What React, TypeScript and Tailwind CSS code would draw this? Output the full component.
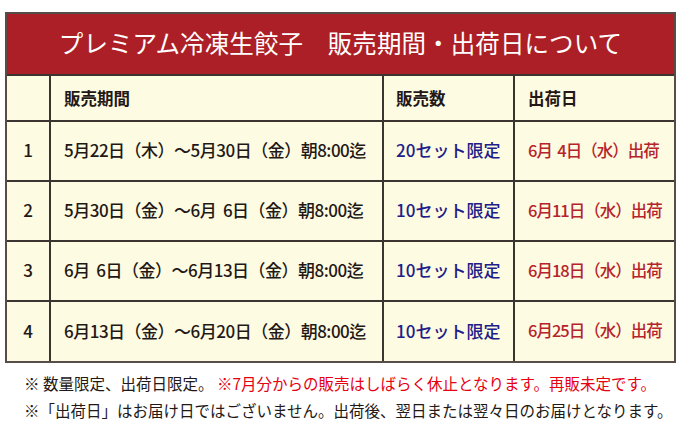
const rows = [
  { no: '1', period: '5月22日（木）～5月30日（金）朝8:00迄', qty: '20セット限定', ship: '6月  4日（水）出荷' },
  { no: '2', period: '5月30日（金）～6月  6日（金）朝8:00迄', qty: '10セット限定', ship: '6月11日（水）出荷' },
  { no: '3', period: '6月  6日（金）～6月13日（金）朝8:00迄', qty: '10セット限定', ship: '6月18日（水）出荷' },
  { no: '4', period: '6月13日（金）～6月20日（金）朝8:00迄', qty: '10セット限定', ship: '6月25日（水）出荷' }
];

const App = () => {
  return (
    <div
      className="w-[680px] h-[439px] bg-white pt-[12px] pl-[5px]"
      style={{ fontFamily: '"Noto Sans CJK JP", "Noto Sans", sans-serif' }}
    >
      <div className="w-[671px] border-2 border-[#574c47] bg-[#fefbe3]">
        <div className="h-[60px] bg-[#ad1f26] flex items-center justify-center text-white text-[24.5px] tracking-[0.1px] pb-[2px]">
          プレミアム冷凍生餃子　販売期間・出荷日について
        </div>
        <table className="w-full border-collapse text-[17px] font-medium">
          <colgroup>
            <col className="w-[43px]" />
            <col className="w-[333px]" />
            <col className="w-[131px]" />
            <col />
          </colgroup>
          <thead>
            <tr className="h-[46px] border-t-2 border-[#3b3431] text-[#231815] text-[16.5px]">
              <th className="border-r-2 border-[#3b3431]"></th>
              <th className="text-left pl-[13px] font-bold border-r-2 border-[#3b3431]">販売期間</th>
              <th className="text-left pl-[12px] font-bold border-r-2 border-[#3b3431]">販売数</th>
              <th className="text-left pl-[13px] font-bold">出荷日</th>
            </tr>
          </thead>
          <tbody>
            {rows.map((r) => (
              <tr key={r.no} className="h-[60px] border-t-2 border-[#3b3431]">
                <td className="text-center text-[#231815] border-r-2 border-[#3b3431] pb-[2px]">{r.no}</td>
                <td className="pl-[13px] text-[#231815] whitespace-pre tracking-[-0.5px] border-r-2 border-[#3b3431] pb-[2px]">{r.period}</td>
                <td className="pl-[12px] text-[#1d2088] border-r-2 border-[#3b3431] pb-[2px]">{r.qty}</td>
                <td className="pl-[13px] text-[#b5242b] whitespace-pre text-[16.5px] tracking-[-1px] pb-[2px]">{r.ship}</td>
              </tr>
            ))}
          </tbody>
        </table>
      </div>
      <div className="pl-[19px] pt-[7px] text-[15.5px] leading-[27px] text-[#231815]">
        <p className="whitespace-pre">
          ※ 数量限定、出荷日限定。 <span className="text-[#e60012]">※7月分からの販売はしばらく休止となります。再販未定です。</span>
        </p>
        <p className="whitespace-pre">※「出荷日」はお届け日ではございません。出荷後、翌日または翌々日のお届けとなります。</p>
      </div>
    </div>
  );
};

export default App;
